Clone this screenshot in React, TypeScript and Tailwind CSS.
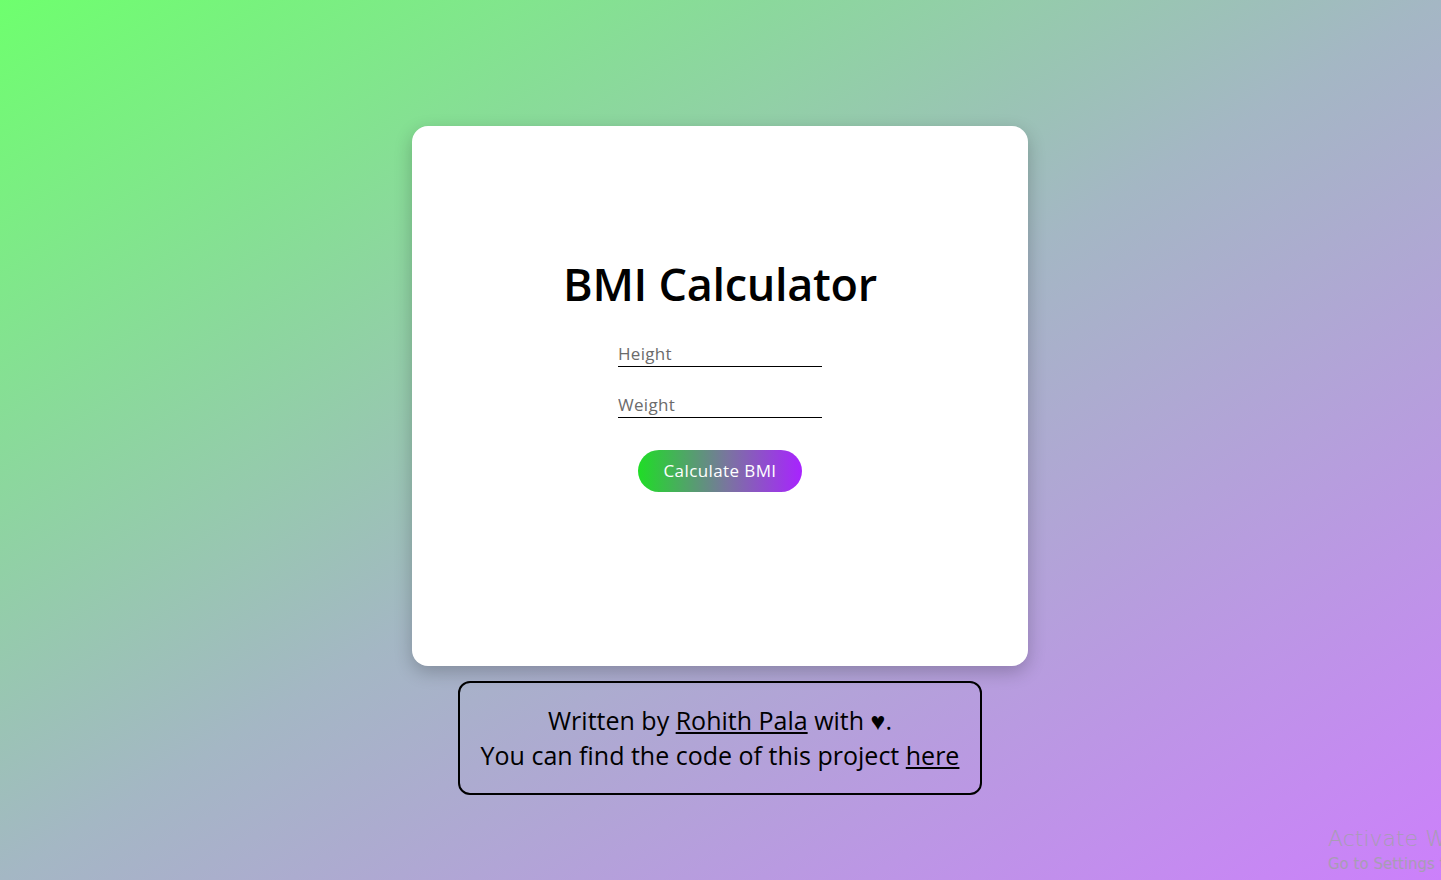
import React from "react";

export default function App() {
  return (
    <div
      className="relative min-h-[880px] w-full overflow-hidden bg-[linear-gradient(to_bottom_right,#6eff6e,#a4b7c4_50%,#cc80fb)] flex flex-col items-center pt-[126px]"
      style={{ fontFamily: '"Open Sans", "Noto Sans", sans-serif' }}
    >
      <div className="mr-[1px] w-[616px] h-[540px] bg-white rounded-[16px] shadow-[0_6px_18px_rgba(0,0,0,0.22)] flex flex-col items-center pt-[130px]">
        <h1 className="text-[45px] leading-[56px] font-semibold text-black tracking-[-0.3px]">BMI Calculator</h1>
        <div className="mt-[32px] flex flex-col items-center">
          <input
            placeholder="Height"
            className="w-[204px] border-b border-black outline-none text-[17px] tracking-[0.3px] leading-[20px] pb-[2px] text-gray-700 placeholder:text-[#6b6b6b]"
          />
          <input
            placeholder="Weight"
            className="mt-[28px] w-[204px] border-b border-black outline-none text-[17px] tracking-[0.3px] leading-[20px] pb-[2px] text-gray-700 placeholder:text-[#6b6b6b]"
          />
          <button className="mt-[32px] w-[164px] h-[42px] rounded-full bg-[linear-gradient(to_right,#1fdd26,#7a74a0_55%,#a823ff)] text-white text-[17px] tracking-[0.4px]">
            Calculate BMI
          </button>
        </div>
      </div>
      <div className="mr-[1px] mt-[15px] w-[524px] h-[114px] border-2 border-black rounded-[12px] flex flex-col items-center justify-center text-[25px] leading-[35px] text-black">
        <p>
          Written by <a className="underline" href="#">Rohith Pala</a> with ♥.
        </p>
        <p>
          You can find the code of this project <a className="underline" href="#">here</a>
        </p>
      </div>
      <div
        className="absolute left-[1328px] top-[824px] text-[#a89cb4] whitespace-nowrap"
        style={{ fontFamily: '"DejaVu Sans", sans-serif' }}
      >
        <div className="text-[22px] leading-[30px] font-light">Activate Windows</div>
        <div className="text-[15px] leading-[20px]">Go to Settings to activate Windows.</div>
      </div>
    </div>
  );
}
